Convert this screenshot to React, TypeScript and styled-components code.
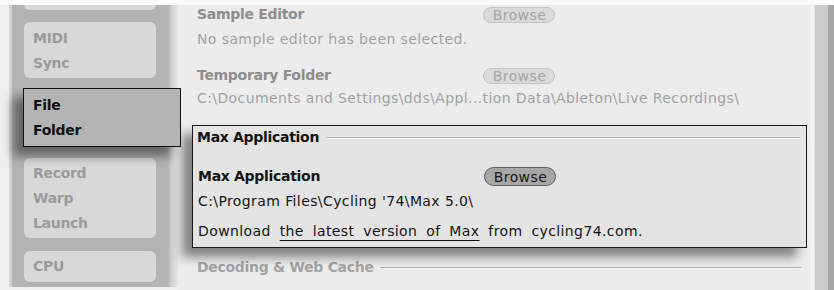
import React from "react";
import styled, { createGlobalStyle } from "styled-components";

const GlobalStyle = createGlobalStyle`
  html, body { margin: 0; padding: 0; background: #fafafa; }
  body { font-family: "DejaVu Sans", "Liberation Sans", Arial, sans-serif; }
`;

const Frame = styled.div`
  width: 834px;
  height: 290px;
  box-sizing: border-box;
  padding: 5px 0 0 9px;
  background: linear-gradient(to bottom, #fbfbfb 0, #fbfbfb 5px, #efefef 5px);
  display: flex;
  overflow: hidden;
  font-size: 14px;
  letter-spacing: 0.4px;
`;

const Sidebar = styled.div`
  width: 166px;
  height: 282px;
  border-left: 3px solid #d2d2d2;
  background: linear-gradient(to right, #b3b3b3 0, #b3b3b3 156px, #d4d4d4 160px, #e4e4e4 166px);
  display: flex;
  flex-direction: column;
  flex-shrink: 0;
`;

const NavBox = styled.div<{ $top: number; $h: number; $pad?: number }>`
  margin: ${(p) => p.$top}px 0 0 12px;
  width: 132px;
  height: ${(p) => p.$h}px;
  box-sizing: border-box;
  padding: ${(p) => p.$pad ?? 3}px 0 0 9px;
  background: #d8d8d8;
  border-radius: 6px;
  color: #9b9b9b;
  font-weight: bold;
  letter-spacing: -0.3px;
  line-height: 25px;
`;

const TopStub = styled.div`
  margin: 0 0 0 12px;
  width: 132px;
  height: 5px;
  background: #d8d8d8;
  border-radius: 0 0 6px 6px;
`;

const SelectedBox = styled.div`
  position: relative;
  z-index: 2;
  margin: 10px -3px 0 11px;
  height: 59px;
  box-sizing: border-box;
  padding: 4px 0 0 9px;
  background: #b4b4b4;
  border: 1px solid #111;
  color: #111;
  font-weight: bold;
  letter-spacing: -0.3px;
  line-height: 25px;
  box-shadow: -10px 9px 10px rgba(0, 0, 0, 0.45);
`;

const Main = styled.div`
  flex: 1;
  height: 285px;
  box-sizing: border-box;
  padding: 1px 3px 0 14px;
  background: #ececec;
  display: flex;
  flex-direction: column;
`;

const Row = styled.div<{ $h: number; $mt?: number }>`
  display: grid;
  grid-template-columns: 286px auto;
  align-items: center;
  height: ${(p) => p.$h}px;
  margin-top: ${(p) => p.$mt ?? 0}px;
  padding-left: 5px;
`;

const Label = styled.div<{ $dark?: boolean }>`
  font-weight: bold;
  letter-spacing: -0.3px;
  line-height: 17px;
  color: ${(p) => (p.$dark ? "#141414" : "#8d8d8d")};
`;

const Text = styled.div<{ $dark?: boolean; $mt?: number }>`
  padding-left: 5px;
  line-height: 17px;
  margin-top: ${(p) => p.$mt ?? 0}px;
  color: ${(p) => (p.$dark ? "#141414" : "#a2a2a2")};
  white-space: nowrap;
`;

const Browse = styled.div<{ $active?: boolean }>`
  width: 72px;
  height: ${(p) => (p.$active ? 19 : 16)}px;
  box-sizing: border-box;
  border-radius: 10px;
  display: flex;
  align-items: center;
  justify-content: center;
  line-height: 1;
  padding-left: 1px;
  background: ${(p) => (p.$active ? "#a7a7a7" : "#dadada")};
  border: 1px solid ${(p) => (p.$active ? "#5e5e5e" : "#c3c3c3")};
  color: ${(p) => (p.$active ? "#1a1a1a" : "#a4a4a4")};
`;

const Group = styled.div`
  margin-top: 18px;
  height: 123px;
  box-sizing: border-box;
  border: 1px solid #1a1a1a;
  background: #e4e4e4;
  padding-top: 3px;
  box-shadow: -10px 9px 10px rgba(0, 0, 0, 0.45);
  position: relative;
  z-index: 1;
`;

const Header = styled.div<{ $dark?: boolean; $gap: number }>`
  display: flex;
  align-items: center;
  padding-left: ${(p) => (p.$dark ? 4 : 5)}px;
  padding-right: 6px;
  line-height: 17px;
  font-weight: bold;
  letter-spacing: -0.3px;
  color: ${(p) => (p.$dark ? "#141414" : "#a3a3a3")};
  white-space: nowrap;
  &::after {
    content: "";
    flex: 1;
    margin-left: ${(p) => p.$gap}px;
    height: 0;
    border-top: 1px solid #b3b3b3;
    border-bottom: 1px solid #f6f6f6;
  }
`;

const Download = styled(Text)`
  word-spacing: 4px;
`;

const Link = styled.span`
  text-decoration: underline;
  text-decoration-color: #111;
  text-underline-offset: 4px;
`;

const DecodingHeader = styled(Header)`
  margin-top: 11px;
`;

const Scrollbar = styled.div`
  width: 24px;
  flex-shrink: 0;
  background: linear-gradient(
    to right,
    #f1f1f1 0,
    #f8f8f8 3px,
    #e0e0e0 5px,
    #cccccc 5px,
    #cccccc 18px,
    #a7a7a7 18px
  );
`;

export default function App() {
  return (
    <>
      <GlobalStyle />
      <Frame>
        <Sidebar>
          <TopStub />
          <NavBox $top={12} $h={56} $pad={4}>
            <div>MIDI</div>
            <div>Sync</div>
          </NavBox>
          <SelectedBox>
            <div>File</div>
            <div>Folder</div>
          </SelectedBox>
          <NavBox $top={11} $h={80}>
            <div>Record</div>
            <div>Warp</div>
            <div>Launch</div>
          </NavBox>
          <NavBox $top={13} $h={31}>
            <div>CPU</div>
          </NavBox>
        </Sidebar>
        <Main>
          <Row $h={17}>
            <Label>Sample Editor</Label>
            <Browse>Browse</Browse>
          </Row>
          <Text $mt={8}>No sample editor has been selected.</Text>
          <Row $h={17} $mt={19}>
            <Label>Temporary Folder</Label>
            <Browse>Browse</Browse>
          </Row>
          <Text $mt={6}>C:\Documents and Settings\dds\Appl...tion Data\Ableton\Live Recordings\</Text>
          <Group>
            <Header $dark $gap={8}>Max Application</Header>
            <Row $h={19} $mt={21}>
              <Label $dark>Max Application</Label>
              <Browse $active>Browse</Browse>
            </Row>
            <Text $dark $mt={7}>C:\Program Files\Cycling '74\Max 5.0\</Text>
            <Download $dark $mt={13}>
              Download <Link>the latest version of Max</Link> from cycling74.com.
            </Download>
          </Group>
          <DecodingHeader $gap={6}>Decoding &amp; Web Cache</DecodingHeader>
        </Main>
        <Scrollbar />
      </Frame>
    </>
  );
}
